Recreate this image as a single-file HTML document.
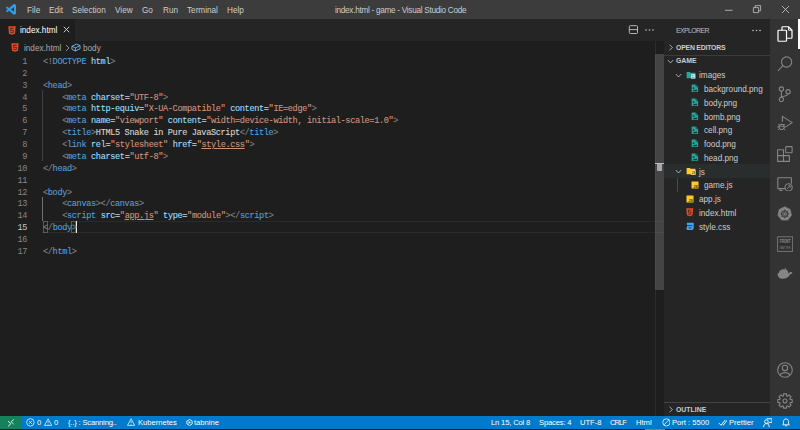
<!DOCTYPE html>
<html><head><meta charset="utf-8">
<style>
*{margin:0;padding:0;box-sizing:border-box}
html,body{width:800px;height:430px;overflow:hidden;background:#1e1e1e;font-family:"Liberation Sans",sans-serif;color:#ccc}
.a{position:absolute;white-space:pre}
svg{display:block}
#title{position:absolute;left:0;top:0;width:800px;height:18.75px;background:#3c3c3c}
.menu{position:absolute;top:1.5px;height:18px;line-height:18px;font-size:8.2px;color:#cccccc;white-space:pre}
#tabs{position:absolute;left:0;top:18.75px;width:664px;height:21.875px;background:#252526}
#tab1{position:absolute;left:0;top:0;width:75px;height:21.875px;background:#1e1e1e}
#editor{position:absolute;left:0;top:40.625px;width:664px;height:375.2px;background:#1e1e1e;overflow:hidden}
#lines{position:absolute;left:0;top:13.75px;width:664px;height:300px}
.code{position:absolute;margin-top:2.5px;left:43px;-webkit-text-stroke:0.12px currentColor;font-family:"Liberation Mono",monospace;font-size:8.6px;letter-spacing:-0.36px;height:11.875px;line-height:11.875px;white-space:pre;color:#d4d4d4}
.ln{position:absolute;margin-top:2.5px;left:0;width:27px;text-align:right;font-family:"Liberation Mono",monospace;font-size:8.6px;letter-spacing:-0.36px;height:11.875px;line-height:11.875px;color:#858585}
.ln.cur{color:#c6c6c6}
.b{color:#808080}.t{color:#569cd6}.at{color:#9cdcfe}.s{color:#ce9178}
.u{text-decoration:underline;text-decoration-thickness:1px;text-underline-offset:1.2px}

#side{position:absolute;left:664px;top:18.75px;width:106px;height:397.1px;background:#252526}
#act{position:absolute;left:770px;top:18.75px;width:30px;height:397.1px;background:#333333}
#status{position:absolute;left:0;top:415.8px;width:800px;height:14.2px;background:#007acc}
.st{position:absolute;top:0.6px;height:13.75px;line-height:13.75px;font-size:7.6px;color:#fff;white-space:pre}
.row{position:absolute;left:0;width:106px;height:13.75px}
.rt{position:absolute;top:0;line-height:13.75px;font-size:8.2px;color:#cccccc;white-space:pre}
.hd{position:absolute;font-size:6.9px;font-weight:bold;color:#cccccc;white-space:pre;line-height:13.75px}
.ic{position:absolute}
</style></head><body>
<div id="title">
  <svg class="ic" style="left:5.6px;top:4.3px" width="10.8" height="10.8" viewBox="0 0 100 100"><path d="M96.46 10.8 L75.86 0.87 C73.48 -0.28 70.62 0.2 68.75 2.07 L29.3 38.04 L12.12 25 C10.52 23.79 8.28 23.89 6.8 25.24 L1.3 30.25 C-0.52 31.9 -0.52 34.76 1.29 36.42 L16.19 50 L1.29 63.58 C-0.52 65.24 -0.52 68.1 1.3 69.75 L6.8 74.76 C8.28 76.11 10.52 76.21 12.12 75 L29.3 61.96 L68.75 97.93 C70.62 99.8 73.48 100.28 75.86 99.13 L96.46 89.2 C98.62 88.16 100 85.98 100 83.58 V16.42 C100 14.02 98.62 11.84 96.46 10.8 Z M75.02 27.3 L45.1 50 L75.02 72.7 Z" fill="#2a9ff0" fill-rule="evenodd"/></svg>
  <div class="menu" style="left:27px">File</div>
  <div class="menu" style="left:49px">Edit</div>
  <div class="menu" style="left:72px">Selection</div>
  <div class="menu" style="left:115px">View</div>
  <div class="menu" style="left:142px">Go</div>
  <div class="menu" style="left:163px">Run</div>
  <div class="menu" style="left:187px">Terminal</div>
  <div class="menu" style="left:227px">Help</div>
  <div class="menu" style="left:335px;letter-spacing:-0.28px">index.html - game - Visual Studio Code</div>
  <svg class="ic" style="left:724px;top:3.5px" width="10" height="12" viewBox="0 0 10 12"><path d="M1 6.3 H8.5" stroke="#ccc" stroke-width="0.75"/></svg>
  <svg class="ic" style="left:752px;top:4px" width="10" height="10" viewBox="0 0 10 10"><path d="M1.4 3.6 H6.6 V8.6 H1.4 Z M3.2 3.6 V1.6 H8.6 V6.8 H6.6" fill="none" stroke="#ccc" stroke-width="0.75"/></svg>
  <svg class="ic" style="left:781px;top:5px" width="9" height="9" viewBox="0 0 9 9"><path d="M1 1 L8 8 M8 1 L1 8" stroke="#ccc" stroke-width="0.8"/></svg>
</div>
<div id="tabs">
  <div id="tab1">
    <svg class="ic" style="left:7.5px;top:7px" width="8" height="9" viewBox="0 0 24 27"><path d="M1 1 H23 L21 23 L12 26 L3 23 Z" fill="#e44d26"/><path d="M17.5 5.5 H6.5 L7.2 14 H15 L14.6 18.3 L12 19.2 L9.4 18.3 L9.2 16.5 H6.9 L7.3 20.2 L12 21.8 L16.7 20.2 L17.5 11.7 H9.6 L9.3 8 H17.2 Z" fill="#1e1e1e" opacity="0.85"/></svg>
    <div class="rt" style="left:20px;top:5.2px;color:#ffffff">index.html</div>
    <svg class="ic" style="left:63px;top:7.6px" width="7" height="7" viewBox="0 0 7 7"><path d="M0.8 0.8 L6.2 6.2 M6.2 0.8 L0.8 6.2" stroke="#ddd" stroke-width="0.9"/></svg>
  </div>
  <svg class="ic" style="left:628.4px;top:5.8px" width="10.5" height="10" viewBox="0 0 10.5 10"><rect x="1.3" y="0.7" width="8.2" height="7.8" rx="0.9" fill="none" stroke="#c5c5c5" stroke-width="0.9"/><path d="M1.3 4.6 H9.5" stroke="#c5c5c5" stroke-width="0.9"/></svg>
  <svg class="ic" style="left:644px;top:8px" width="11" height="6" viewBox="0 0 11 6"><circle cx="2" cy="3" r="0.8" fill="#c5c5c5"/><circle cx="5.5" cy="3" r="0.8" fill="#c5c5c5"/><circle cx="9" cy="3" r="0.8" fill="#c5c5c5"/></svg>
</div>
<div id="editor">
  <svg class="ic" style="left:10.5px;top:2.5px" width="8" height="9" viewBox="0 0 24 27"><path d="M1 1 H23 L21 23 L12 26 L3 23 Z" fill="#e44d26"/><path d="M17.5 5.5 H6.5 L7.2 14 H15 L14.6 18.3 L12 19.2 L9.4 18.3 L9.2 16.5 H6.9 L7.3 20.2 L12 21.8 L16.7 20.2 L17.5 11.7 H9.6 L9.3 8 H17.2 Z" fill="#1e1e1e" opacity="0.85"/></svg>
  <div class="rt" style="left:24px;top:1.2px;color:#a9a9a9">index.html</div>
  <svg class="ic" style="left:64.5px;top:3.5px" width="5" height="8" viewBox="0 0 5 8"><path d="M1 1 L4 4 L1 7" fill="none" stroke="#a9a9a9" stroke-width="0.8"/></svg>
  <svg class="ic" style="left:71px;top:2.5px" width="10" height="9" viewBox="0 0 16 14"><path d="M1.5 5 L9 1.5 L14.5 4 V9 L7 12.5 L1.5 10 Z M1.5 5 L7 7.5 L14.5 4 M7 7.5 V12.5" fill="none" stroke="#75beff" stroke-width="1.4" stroke-linejoin="round"/></svg>
  <div class="rt" style="left:83px;top:1.2px;color:#a9a9a9">body</div>
  <div id="lines">
    <!-- indent guides -->
    <div class="a" style="left:42.4px;top:35.625px;width:0.6px;height:71.25px;background:#404040"></div>
    <div class="a" style="left:42.4px;top:142.5px;width:0.6px;height:23.75px;background:#707070"></div>
    <!-- current line border -->
    <div class="a" style="left:42px;top:166.25px;width:622px;height:11.875px;border-top:1px solid #2a2a2a;border-bottom:1px solid #2a2a2a"></div>
    <div class="a" style="left:42.5px;top:166.25px;width:5px;height:11.875px;border:0.7px solid #5b5b50;background:rgba(0,100,0,0.08)"></div>
    <div class="a" style="left:71.3px;top:166.25px;width:5px;height:11.875px;border:0.7px solid #5b5b50;background:rgba(0,100,0,0.08)"></div>
    <div class="a" style="left:76.2px;top:166.25px;width:1.1px;height:11.875px;background:#e8e8e8"></div>
<div class="ln" style="top:0.000px">1</div><div class="code" style="top:0.000px"><span class="b">&lt;!</span><span class="t">DOCTYPE</span>&#32;<span class="at">html</span><span class="b">&gt;</span></div>
<div class="ln" style="top:11.875px">2</div><div class="code" style="top:11.875px"></div>
<div class="ln" style="top:23.750px">3</div><div class="code" style="top:23.750px"><span class="b">&lt;</span><span class="t">head</span><span class="b">&gt;</span></div>
<div class="ln" style="top:35.625px">4</div><div class="code" style="top:35.625px">    <span class="b">&lt;</span><span class="t">meta</span> <span class="at">charset</span>=<span class="s">"UTF-8"</span><span class="b">&gt;</span></div>
<div class="ln" style="top:47.500px">5</div><div class="code" style="top:47.500px">    <span class="b">&lt;</span><span class="t">meta</span> <span class="at">http-equiv</span>=<span class="s">"X-UA-Compatible"</span> <span class="at">content</span>=<span class="s">"IE=edge"</span><span class="b">&gt;</span></div>
<div class="ln" style="top:59.375px">6</div><div class="code" style="top:59.375px">    <span class="b">&lt;</span><span class="t">meta</span> <span class="at">name</span>=<span class="s">"viewport"</span> <span class="at">content</span>=<span class="s">"width=device-width, initial-scale=1.0"</span><span class="b">&gt;</span></div>
<div class="ln" style="top:71.250px">7</div><div class="code" style="top:71.250px">    <span class="b">&lt;</span><span class="t">title</span><span class="b">&gt;</span>HTML5 Snake in Pure JavaScript<span class="b">&lt;/</span><span class="t">title</span><span class="b">&gt;</span></div>
<div class="ln" style="top:83.125px">8</div><div class="code" style="top:83.125px">    <span class="b">&lt;</span><span class="t">link</span> <span class="at">rel</span>=<span class="s">"stylesheet"</span> <span class="at">href</span>=<span class="s">"</span><span class="s u">style.css</span><span class="s">"</span><span class="b">&gt;</span></div>
<div class="ln" style="top:95.000px">9</div><div class="code" style="top:95.000px">    <span class="b">&lt;</span><span class="t">meta</span> <span class="at">charset</span>=<span class="s">"utf-8"</span><span class="b">&gt;</span></div>
<div class="ln" style="top:106.875px">10</div><div class="code" style="top:106.875px"><span class="b">&lt;/</span><span class="t">head</span><span class="b">&gt;</span></div>
<div class="ln" style="top:118.750px">11</div><div class="code" style="top:118.750px"></div>
<div class="ln" style="top:130.625px">12</div><div class="code" style="top:130.625px"><span class="b">&lt;</span><span class="t">body</span><span class="b">&gt;</span></div>
<div class="ln" style="top:142.500px">13</div><div class="code" style="top:142.500px">    <span class="b">&lt;</span><span class="t">canvas</span><span class="b">&gt;&lt;/</span><span class="t">canvas</span><span class="b">&gt;</span></div>
<div class="ln" style="top:154.375px">14</div><div class="code" style="top:154.375px">    <span class="b">&lt;</span><span class="t">script</span> <span class="at">src</span>=<span class="s">"</span><span class="s u">app.js</span><span class="s">"</span> <span class="at">type</span>=<span class="s">"module"</span><span class="b">&gt;&lt;/</span><span class="t">script</span><span class="b">&gt;</span></div>
<div class="ln cur" style="top:166.250px">15</div><div class="code" style="top:166.250px"><span class="b bm">&lt;</span><span class="b">/</span><span class="t">body</span><span class="b bm">&gt;</span></div>
<div class="ln" style="top:178.125px">16</div><div class="code" style="top:178.125px"></div>
<div class="ln" style="top:190.000px">17</div><div class="code" style="top:190.000px"><span class="b">&lt;/</span><span class="t">html</span><span class="b">&gt;</span></div>

  </div>
  <!-- scrollbar -->
  
  <div class="a" style="left:655.3px;top:0;width:0.8px;height:375.625px;background:#2b2b2b"></div>
  <div class="a" style="left:655px;top:13.75px;width:9px;height:236px;background:rgba(121,121,121,0.42)"></div>
  <div class="a" style="left:655px;top:122.3px;width:9px;height:1.1px;background:#bdbdbd"></div>
  <div class="a" style="left:656.5px;top:123.4px;width:5px;height:7px;background:#a8a8a8"></div>
</div>
<div id="side">
  <div class="hd" style="left:12px;top:5px;font-weight:normal;font-size:7px;letter-spacing:-0.65px;color:#bbbbbb">EXPLORER</div>
  <svg class="ic" style="left:86.5px;top:10.5px" width="11" height="3" viewBox="0 0 11 3"><circle cx="2" cy="1.5" r="0.8" fill="#c5c5c5"/><circle cx="5.5" cy="1.5" r="0.8" fill="#c5c5c5"/><circle cx="9" cy="1.5" r="0.8" fill="#c5c5c5"/></svg>
  <!-- OPEN EDITORS -->
  <div class="row" style="top:21.875px">
    <svg class="ic" style="left:3.5px;top:3.5px" width="6" height="7" viewBox="0 0 6 7"><path d="M1.5 0.8 L4.5 3.5 L1.5 6.2" fill="none" stroke="#c5c5c5" stroke-width="0.8"/></svg>
    <div class="hd" style="left:12px;top:0;letter-spacing:-0.22px">OPEN EDITORS</div>
  </div>
  <div class="a" style="left:0;top:36.1px;width:106px;height:1px;background:#3b3b3b"></div>
  <div class="row" style="top:35.625px">
    <svg class="ic" style="left:3px;top:4.5px" width="7" height="5" viewBox="0 0 7 5"><path d="M0.8 1 L3.5 4 L6.2 1" fill="none" stroke="#c5c5c5" stroke-width="0.8"/></svg>
    <div class="hd" style="left:12px;top:0">GAME</div>
  </div>
  <div class="row" style="top:49.375px"><svg class="ic" style="left:11px;top:4.5px" width="7" height="5" viewBox="0 0 7 5"><path d="M0.8 1 L3.5 4 L6.2 1" fill="none" stroke="#c5c5c5" stroke-width="0.8"/></svg><svg class="ic" style="left:21.5px;top:1.9px" width="10" height="10" viewBox="0 0 16 16"><path d="M1 3 H6 L7.5 4.5 H15 V13 H1 Z" fill="#26a69a"/><rect x="8" y="6.5" width="7" height="7.5" rx="1" fill="#b2dfdb"/><circle cx="10" cy="8.8" r="0.9" fill="#26a69a"/><path d="M9 13 L11 11 L14 13 Z" fill="#26a69a"/></svg><div class="rt" style="left:35px;top:1.2px">images</div></div>
<div class="row" style="top:63.125px"><svg class="ic" style="left:27.3px;top:2.4px" width="7.6" height="8.6" viewBox="0 0 16 18"><path d="M2.8 1 H10 L15 6 V15.6 Q15 17 13.6 17 H2.8 Q1.4 17 1.4 15.6 V2.4 Q1.4 1 2.8 1 Z" fill="#26a69a"/><path d="M9.6 1.4 Q9.6 6.2 14.8 6.4" fill="none" stroke="#1b3f3b" stroke-width="1.6"/><circle cx="5.4" cy="8.6" r="2" fill="#1f2b2a"/><path d="M3.8 15 L6.4 11.8 L8.6 13.2 L11 11.2 L13.4 15 Z" fill="#1f2b2a"/></svg><div class="rt" style="left:40px;top:1.2px">background.png</div></div>
<div class="row" style="top:76.875px"><svg class="ic" style="left:27.3px;top:2.4px" width="7.6" height="8.6" viewBox="0 0 16 18"><path d="M2.8 1 H10 L15 6 V15.6 Q15 17 13.6 17 H2.8 Q1.4 17 1.4 15.6 V2.4 Q1.4 1 2.8 1 Z" fill="#26a69a"/><path d="M9.6 1.4 Q9.6 6.2 14.8 6.4" fill="none" stroke="#1b3f3b" stroke-width="1.6"/><circle cx="5.4" cy="8.6" r="2" fill="#1f2b2a"/><path d="M3.8 15 L6.4 11.8 L8.6 13.2 L11 11.2 L13.4 15 Z" fill="#1f2b2a"/></svg><div class="rt" style="left:40px;top:1.2px">body.png</div></div>
<div class="row" style="top:90.625px"><svg class="ic" style="left:27.3px;top:2.4px" width="7.6" height="8.6" viewBox="0 0 16 18"><path d="M2.8 1 H10 L15 6 V15.6 Q15 17 13.6 17 H2.8 Q1.4 17 1.4 15.6 V2.4 Q1.4 1 2.8 1 Z" fill="#26a69a"/><path d="M9.6 1.4 Q9.6 6.2 14.8 6.4" fill="none" stroke="#1b3f3b" stroke-width="1.6"/><circle cx="5.4" cy="8.6" r="2" fill="#1f2b2a"/><path d="M3.8 15 L6.4 11.8 L8.6 13.2 L11 11.2 L13.4 15 Z" fill="#1f2b2a"/></svg><div class="rt" style="left:40px;top:1.2px">bomb.png</div></div>
<div class="row" style="top:104.375px"><svg class="ic" style="left:27.3px;top:2.4px" width="7.6" height="8.6" viewBox="0 0 16 18"><path d="M2.8 1 H10 L15 6 V15.6 Q15 17 13.6 17 H2.8 Q1.4 17 1.4 15.6 V2.4 Q1.4 1 2.8 1 Z" fill="#26a69a"/><path d="M9.6 1.4 Q9.6 6.2 14.8 6.4" fill="none" stroke="#1b3f3b" stroke-width="1.6"/><circle cx="5.4" cy="8.6" r="2" fill="#1f2b2a"/><path d="M3.8 15 L6.4 11.8 L8.6 13.2 L11 11.2 L13.4 15 Z" fill="#1f2b2a"/></svg><div class="rt" style="left:40px;top:1.2px">cell.png</div></div>
<div class="row" style="top:118.125px"><svg class="ic" style="left:27.3px;top:2.4px" width="7.6" height="8.6" viewBox="0 0 16 18"><path d="M2.8 1 H10 L15 6 V15.6 Q15 17 13.6 17 H2.8 Q1.4 17 1.4 15.6 V2.4 Q1.4 1 2.8 1 Z" fill="#26a69a"/><path d="M9.6 1.4 Q9.6 6.2 14.8 6.4" fill="none" stroke="#1b3f3b" stroke-width="1.6"/><circle cx="5.4" cy="8.6" r="2" fill="#1f2b2a"/><path d="M3.8 15 L6.4 11.8 L8.6 13.2 L11 11.2 L13.4 15 Z" fill="#1f2b2a"/></svg><div class="rt" style="left:40px;top:1.2px">food.png</div></div>
<div class="row" style="top:131.875px"><svg class="ic" style="left:27.3px;top:2.4px" width="7.6" height="8.6" viewBox="0 0 16 18"><path d="M2.8 1 H10 L15 6 V15.6 Q15 17 13.6 17 H2.8 Q1.4 17 1.4 15.6 V2.4 Q1.4 1 2.8 1 Z" fill="#26a69a"/><path d="M9.6 1.4 Q9.6 6.2 14.8 6.4" fill="none" stroke="#1b3f3b" stroke-width="1.6"/><circle cx="5.4" cy="8.6" r="2" fill="#1f2b2a"/><path d="M3.8 15 L6.4 11.8 L8.6 13.2 L11 11.2 L13.4 15 Z" fill="#1f2b2a"/></svg><div class="rt" style="left:40px;top:1.2px">head.png</div></div>
<div class="row" style="top:145.625px;background:#2a2d2e"><svg class="ic" style="left:11px;top:4.5px" width="7" height="5" viewBox="0 0 7 5"><path d="M0.8 1 L3.5 4 L6.2 1" fill="none" stroke="#c5c5c5" stroke-width="0.8"/></svg><svg class="ic" style="left:21.5px;top:1.9px" width="10" height="10" viewBox="0 0 16 16"><path d="M1 3 H6 L7.5 4.5 H15 V13 H1 Z" fill="#ffca28"/><rect x="7.5" y="7" width="8" height="7" fill="#ffe082"/><text x="15" y="13.3" font-family="Liberation Sans" font-size="5" font-weight="bold" fill="#5d4a00" text-anchor="end">JS</text></svg><div class="rt" style="left:35px;top:1.2px">js</div></div>
<div class="a" style="left:12.5px;top:159.375px;width:0.7px;height:13.75px;background:#4a4a4a"></div>
<div class="row" style="top:159.375px"><svg class="ic" style="left:27px;top:2.9px" width="8" height="8" viewBox="0 0 16 16"><rect x="1" y="1" width="14" height="14" fill="#ffca28"/><text x="13.5" y="14" font-family="Liberation Sans" font-size="7" font-weight="bold" fill="#252526" text-anchor="end">JS</text></svg><div class="rt" style="left:40px;top:1.2px">game.js</div></div>
<div class="row" style="top:173.125px"><svg class="ic" style="left:22px;top:2.9px" width="8" height="8" viewBox="0 0 16 16"><rect x="1" y="1" width="14" height="14" fill="#ffca28"/><text x="13.5" y="14" font-family="Liberation Sans" font-size="7" font-weight="bold" fill="#252526" text-anchor="end">JS</text></svg><div class="rt" style="left:35px;top:1.2px">app.js</div></div>
<div class="row" style="top:186.875px"><svg class="ic" style="left:22px;top:2.6px" width="7.5" height="8.5" viewBox="0 0 24 27"><path d="M1 1 H23 L21 23 L12 26 L3 23 Z" fill="#e44d26"/><path d="M17.5 5.5 H6.5 L7.2 14 H15 L14.6 18.3 L12 19.2 L9.4 18.3 L9.2 16.5 H6.9 L7.3 20.2 L12 21.8 L16.7 20.2 L17.5 11.7 H9.6 L9.3 8 H17.2 Z" fill="#1e1e1e" opacity="0.85"/></svg><div class="rt" style="left:35px;top:1.2px">index.html</div></div>
<div class="row" style="top:200.625px"><svg class="ic" style="left:21.8px;top:2.4px" width="8" height="8.5" viewBox="0 0 16 17"><path d="M1.8 1.6 H15.4 V11 L14.6 15 Q11.6 16.6 8 16.6 Q4 16.6 1.2 15 L0.6 11 H4.4 Q4.6 13 8 13.2 Q11.4 13 11.8 11 H2.2 V7.4 H12.6 V5.8 H1.8 Z" fill="#42a5f5"/></svg><div class="rt" style="left:35px;top:1.2px">style.css</div></div>
  <div class="a" style="left:0;top:383.4px;width:106px;height:0.6px;background:#444"></div>
  <div class="row" style="top:383.75px">
    <svg class="ic" style="left:3.5px;top:3.5px" width="6" height="7" viewBox="0 0 6 7"><path d="M1.5 0.8 L4.5 3.5 L1.5 6.2" fill="none" stroke="#c5c5c5" stroke-width="0.8"/></svg>
    <div class="hd" style="left:12px;top:0">OUTLINE</div>
  </div>
</div>
<div id="act">
  <div class="a" style="left:28px;top:0;width:2px;height:30px;background:#ffffff"></div>
  <svg class="ic" style="left:7px;top:7.00px" width="16" height="16" viewBox="0 0 16 16" fill="none" stroke="#ffffff" stroke-width="1.2" stroke-linejoin="round"><path d="M5 4.2 V1.5 Q5 0.75 5.75 0.75 H11.5 L15 4.25 V11.5 Q15 12.25 14.25 12.25 H9.6"/><path d="M11.5 0.9 V4.2 H14.9" stroke-width="0.9"/><path d="M1.75 4.25 H8.75 Q9.5 4.25 9.5 5 V14.5 Q9.5 15.25 8.75 15.25 H1.75 Q1 15.25 1 14.5 V5 Q1 4.25 1.75 4.25 Z"/></svg>
<svg class="ic" style="left:7px;top:36.85px" width="16" height="16" viewBox="0 0 16 16" fill="none" stroke="#858585" stroke-width="1.1" stroke-linejoin="round"><circle cx="9.6" cy="6" r="5.1"/><path d="M5.9 9.7 L1 15"/></svg>
<svg class="ic" style="left:7px;top:66.75px" width="16" height="16" viewBox="0 0 16 16" fill="none" stroke="#858585" stroke-width="1.1" stroke-linejoin="round"><circle cx="4.4" cy="3" r="2.1"/><circle cx="11.1" cy="5.7" r="2.1"/><circle cx="4.4" cy="13.4" r="2.1"/><path d="M4.4 5.1 V11.3 M11.1 7.8 C11.1 10.3 6 9.6 4.7 11.4"/></svg>
<svg class="ic" style="left:7px;top:95.25px" width="16" height="16" viewBox="0 0 16 16" fill="none" stroke="#858585" stroke-width="1.1" stroke-linejoin="round"><path d="M5.4 7.8 V2.4 L15.2 8.6 L9 12.6"/><ellipse cx="4.6" cy="12.9" rx="2.6" ry="2.6"/><path d="M1.4 10.4 L2.8 11.4 M7.8 10.4 L6.4 11.4 M0.3 13 H2 M8.9 13 H7.2 M1 16 L2.4 14.8 M8.2 16 L6.8 14.8 M2 12.2 H7.2" stroke-width="1"/></svg>
<svg class="ic" style="left:7px;top:126.75px" width="16" height="16" viewBox="0 0 16 16" fill="none" stroke="#858585" stroke-width="1.1" stroke-linejoin="round"><path d="M0.6 3.8 H6.5 V15.4 H0.6 Z M0.6 9.6 H12.4 V15.4 H6.5"/><rect x="8.7" y="0.6" width="6.4" height="6.2" rx="0.6"/></svg>
<svg class="ic" style="left:7px;top:156.25px" width="16" height="16" viewBox="0 0 16 16" fill="none" stroke="#858585" stroke-width="1.1" stroke-linejoin="round"><path d="M8.2 13.6 H0.8 V2.7 H14.4 V8.8"/><path d="M3 13.8 V15.6 H5.5"/><circle cx="11.6" cy="12.4" r="3.6"/><path d="M10 14 L13.2 10.8 M11.2 10.8 H13.2 V12.8" stroke-width="0.9"/></svg>
<svg class="ic" style="left:7px;top:187.25px" width="16" height="16" viewBox="0 0 16 16"><path d="M7.70 0.80 L13.17 3.44 L14.52 9.36 L10.74 14.11 L4.66 14.11 L0.88 9.36 L2.23 3.44 Z" fill="#858585" stroke="#858585" stroke-width="0.6" stroke-linejoin="round"/><circle cx="7.7" cy="7.9" r="3.2" fill="none" stroke="#333" stroke-width="0.9"/><path d="M7.7 3.4 V12.4 M3.2 7.9 H12.2 M4.5 4.7 L10.9 11.1 M10.9 4.7 L4.5 11.1" stroke="#333" stroke-width="0.75"/><circle cx="7.7" cy="7.9" r="1" fill="#858585"/></svg>
<svg class="ic" style="left:7px;top:217.05px" width="16" height="16" viewBox="0 0 16 16"><rect x="0.6" y="0.8" width="15" height="14.6" fill="none" stroke="#7a7a7a" stroke-width="0.9"/><g transform="rotate(0.01)"><text x="8.1" y="6.6" font-family="Liberation Sans" font-size="4.6" font-weight="bold" fill="#8a8a8a" text-anchor="middle" textLength="10.6" lengthAdjust="spacingAndGlyphs">FRONT</text><text x="8.1" y="13.2" font-family="Liberation Sans" font-size="4.4" fill="#7d7d7d" text-anchor="middle" textLength="10.6" lengthAdjust="spacingAndGlyphs">MATTER</text></g><path d="M2.6 8 H13.6" stroke="#2a2a2a" stroke-width="1.2"/></svg>
<svg class="ic" style="left:7px;top:247.25px" width="16" height="16" viewBox="0 0 16 16"><path d="M0.5 7.2 H12 C12.5 6.2 13.6 5.8 15.4 6.4 C15.1 7.6 14.3 8.2 13.1 8.3 C11.9 11.5 8.8 12.8 5.9 12.8 C2.5 12.8 0.5 10.8 0.5 7.2 Z" fill="#858585"/><path d="M1.8 9 V7.4 C1.8 4.6 4.2 3.2 7 3.2 C9.8 3.2 11.4 4.8 11.4 7.4 V9 Z" fill="#858585"/><path d="M7.4 3.4 L8.4 1.6 L9.2 3.6 Z" fill="#858585"/></svg>
<svg class="ic" style="left:7px;top:343.55px" width="16" height="16" viewBox="0 0 16 16" fill="none" stroke="#858585" stroke-width="1.1" stroke-linejoin="round"><circle cx="8" cy="8" r="7.3"/><circle cx="8" cy="5.9" r="2.7"/><path d="M3.3 13.2 C4.3 9.8 11.7 9.8 12.7 13.2"/></svg>
<svg class="ic" style="left:7px;top:374.15px" width="16" height="16" viewBox="0 0 16 16" fill="none" stroke="#858585" stroke-width="1.1" stroke-linejoin="round"><circle cx="8" cy="8" r="2"/><path d="M13.16 6.40 L15.15 6.55 L15.15 9.45 L13.16 9.60 L12.78 10.52 L14.08 12.03 L12.03 14.08 L10.52 12.78 L9.60 13.16 L9.45 15.15 L6.55 15.15 L6.40 13.16 L5.48 12.78 L3.97 14.08 L1.92 12.03 L3.22 10.52 L2.84 9.60 L0.85 9.45 L0.85 6.55 L2.84 6.40 L3.22 5.48 L1.92 3.97 L3.97 1.92 L5.48 3.22 L6.40 2.84 L6.55 0.85 L9.45 0.85 L9.60 2.84 L10.52 3.22 L12.03 1.92 L14.08 3.97 L12.78 5.48 Z"/></svg>
</div>
<div id="status">
  <div class="a" style="left:0;top:0;width:21px;height:13.75px;background:#16825d"></div>
  <svg class="ic" style="left:7px;top:2.75px" width="8" height="9" viewBox="0 0 8 9"><path d="M1 2.2 L4 4.7 L1 7.4 M6.8 0.4 L4.1 2.8 L6.8 5.2" fill="none" stroke="#e8f0ea" stroke-width="0.9"/></svg>
  <svg class="ic" style="left:26.3px;top:2.3px" width="8.8" height="8.8" viewBox="0 0 16 16" fill="none" stroke="#fff" stroke-width="1.35"><circle cx="8" cy="8" r="6.8"/><path d="M5.4 5.4 L10.6 10.6 M10.6 5.4 L5.4 10.6"/></svg>
<div class="st" style="left:37px">0</div>
<svg class="ic" style="left:43.6px;top:1.9px" width="8.2" height="8.2" viewBox="0 0 16 16" fill="none" stroke="#fff" stroke-width="1.4"><path d="M8 1.5 L15 14.5 H1 Z" stroke-linejoin="round"/><path d="M8 6 V10 M8 11.5 V13"/></svg>
<div class="st" style="left:54px">0</div>
<div class="st" style="left:68px"><span style="letter-spacing:-0.17px">{..} : Scanning..</span></div>
<svg class="ic" style="left:127px;top:1.9px" width="8.2" height="8.2" viewBox="0 0 16 16" fill="none" stroke="#fff" stroke-width="1.4"><path d="M8 1.5 L15 14.5 H1 Z" stroke-linejoin="round"/><path d="M8 6 V10 M8 11.5 V13"/></svg>
<div class="st" style="left:138px">Kubernetes</div>
<svg class="ic" style="left:185.6px;top:3.2px" width="7" height="7" viewBox="0 0 16 16" fill="none" stroke="#fff" stroke-width="1.2"><path d="M8 1.2 L14 4.6 V11.4 L8 14.8 L2 11.4 V4.6 Z" stroke-width="2"/><path d="M6 4.8 L11.2 8 L6 11.2 Z" fill="#fff" stroke="none"/></svg>
<div class="st" style="left:194px">tabnine</div>
<div class="st" style="left:491px"><span style="letter-spacing:-0.15px">Ln 15, Col 8</span></div>
<div class="st" style="left:539px"><span style="letter-spacing:-0.15px">Spaces: 4</span></div>
<div class="st" style="left:580px">UTF-8</div>
<div class="st" style="left:610px"><span style="letter-spacing:-1px">CRLF</span></div>
<div class="st" style="left:636px">Html</div>
<svg class="ic" style="left:661.6px;top:2.5px" width="8.8" height="8.8" viewBox="0 0 16 16" fill="none" stroke="#fff" stroke-width="1.4"><circle cx="8" cy="8" r="6.6"/><path d="M3.4 12.6 L12.6 3.4"/></svg>
<div class="st" style="left:672px">Port : 5500</div>
<svg class="ic" style="left:717.5px;top:2.6px" width="9" height="9" viewBox="0 0 10 10" fill="none" stroke="#fff" stroke-width="1.2"><path d="M1 5.6 L3.3 8 L8 2.2 M5.3 7.5 L5.8 8 L10.4 2.2" stroke-width="1.05"/></svg>
<div class="st" style="left:729px">Prettier</div>
<svg class="ic" style="left:762.5px;top:2.4px" width="9.5" height="9.5" viewBox="0 0 10 10" fill="none" stroke="#fff" stroke-width="1"><path d="M3.8 0.8 H9.5 V4.6 H7 L5.6 6" stroke-linejoin="round"/><circle cx="3.6" cy="3.8" r="1.9"/><path d="M0.6 9.6 C0.9 6.8 2 5.9 3.6 5.9 C5.2 5.9 6.3 6.8 6.6 9.6"/></svg>
<svg class="ic" style="left:782.4px;top:2.6px" width="8" height="9" viewBox="0 0 10 11" fill="none" stroke="#fff" stroke-width="1.1"><path d="M1.8 7.6 V4.6 C1.8 2.6 3 1 5 1 C7 1 8.2 2.6 8.2 4.6 V7.6 L9.2 8.4 H0.8 Z" stroke-linejoin="round"/><path d="M3.8 9.4 Q5 10.4 6.2 9.4" stroke-width="1"/></svg>
  <div class="a" style="left:0;top:13px;width:800px;height:1.2px;background:#1b1e22"></div>
  <div class="a" style="left:645px;top:13px;width:20px;height:1.2px;background:#a8703e"></div>
</div>
</body></html>
